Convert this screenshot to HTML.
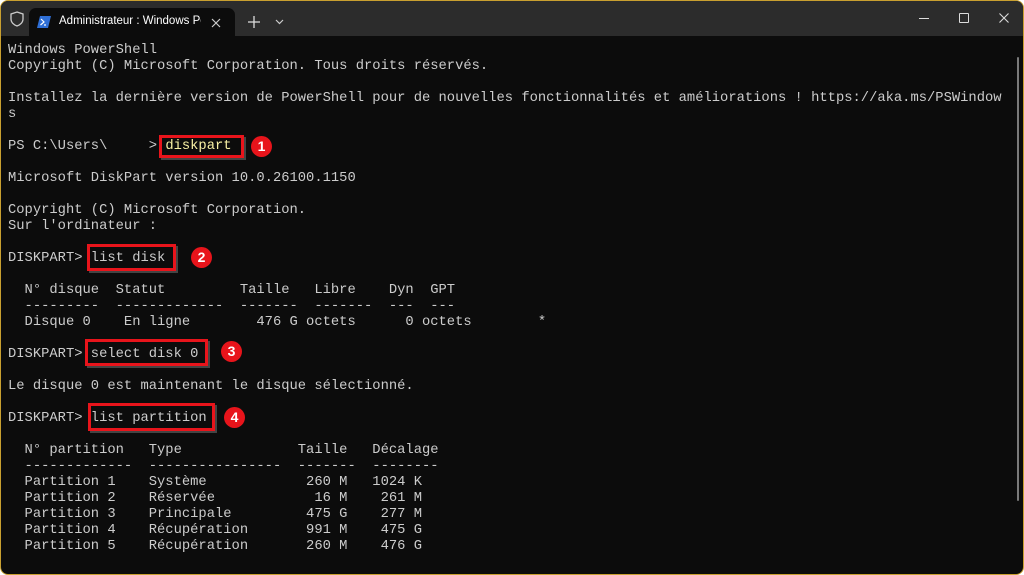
<!DOCTYPE html>
<html><head><meta charset="utf-8"><style>
*{margin:0;padding:0;box-sizing:border-box}
html,body{width:1024px;height:575px;overflow:hidden;background:#fff}
.win{position:absolute;left:0;top:0;width:1024px;height:575px;background:#0c0c0c;border:1.5px solid #c9a030;border-radius:8px;overflow:hidden}
.tb{position:absolute;left:0;top:0;width:100%;height:35px;background:#2c2c2c}
.tab{position:absolute;left:28px;top:7px;width:206px;height:29px;background:#0c0c0c;border-radius:7px 7px 0 0}
.tab span{position:absolute;left:30px;top:7px;font:11.5px "Liberation Sans",sans-serif;color:#fff;white-space:nowrap;width:142px;overflow:hidden}
.term{position:absolute;left:7px;top:42px;font-family:"Liberation Mono",monospace;font-size:13.8px;line-height:16px;color:#cccccc;white-space:pre}
.box{position:absolute;border:3px solid #e8141b;box-shadow:2px 2px 0 #444}
.num{position:absolute;width:21px;height:21px;border-radius:50%;background:#e8141b;color:#fff;font:bold 14px/21px "Liberation Sans",sans-serif;text-align:center}
.y{color:#f9f1a5}
</style></head><body>
<div class="win">
<div class="tb">
 <svg style="position:absolute;left:9px;top:10px" width="14" height="16" viewBox="0 0 14 16"><path d="M7 1 L13 3 V8 C13 11.5 10 14 7 15 C4 14 1 11.5 1 8 V3 Z" fill="none" stroke="#ccc" stroke-width="1.3"/></svg>
 <div class="tab">
  <svg style="position:absolute;left:8px;top:7px" width="14" height="14" viewBox="0 0 14 14"><path d="M3 1 H14 L11 13 H0 Z" fill="#2f6fd6"/><path d="M4 4 L7 7 L3.5 10 M7 10 H9" stroke="#fff" stroke-width="1.2" fill="none"/></svg>
  <span>Administrateur : Windows PowerShell</span>
  <svg style="position:absolute;left:182px;top:10px" width="10" height="10" viewBox="0 0 10 10"><path d="M1 1L9 9M9 1L1 9" stroke="#ccc" stroke-width="1.2"/></svg>
 </div>
 <svg style="position:absolute;left:247px;top:15px" width="12" height="12" viewBox="0 0 12 12"><path d="M6 0V12M0 6H12" stroke="#ddd" stroke-width="1.3"/></svg>
 <svg style="position:absolute;left:274px;top:18px" width="9" height="6" viewBox="0 0 9 6"><path d="M1 1L4.5 4.5L8 1" stroke="#ccc" stroke-width="1.2" fill="none"/></svg>
 <div style="position:absolute;left:918px;top:17px;width:10px;height:1px;background:#ddd"></div>
 <div style="position:absolute;left:958px;top:12px;width:10px;height:10px;border:1px solid #ddd;border-radius:1px"></div>
 <svg style="position:absolute;left:998px;top:12px" width="10" height="10" viewBox="0 0 10 10"><path d="M0.5 0.5L9.5 9.5M9.5 0.5L0.5 9.5" stroke="#ddd" stroke-width="1.1"/></svg>
</div>
<div style="position:absolute;left:1016px;top:56px;width:2px;height:444px;background:#7a7a7a;border-radius:1px"></div>
<div class="term">Windows PowerShell
Copyright (C) Microsoft Corporation. Tous droits réservés.

Installez la dernière version de PowerShell pour de nouvelles fonctionnalités et améliorations ! https://aka.ms/PSWindow
s

PS C:\Users\     > <span class="y">diskpart</span>

Microsoft DiskPart version 10.0.26100.1150

Copyright (C) Microsoft Corporation.
Sur l'ordinateur :

DISKPART> list disk

  N° disque  Statut         Taille   Libre    Dyn  GPT
  ---------  -------------  -------  -------  ---  ---
  Disque 0    En ligne        476 G octets      0 octets        *

DISKPART> select disk 0

Le disque 0 est maintenant le disque sélectionné.

DISKPART> list partition

  N° partition   Type              Taille   Décalage
  -------------  ----------------  -------  --------
  Partition 1    Système            260 M   1024 K
  Partition 2    Réservée            16 M    261 M
  Partition 3    Principale         475 G    277 M
  Partition 4    Récupération       991 M    475 G
  Partition 5    Récupération       260 M    476 G</div>
<div class="box" style="left:158px;top:134px;width:85px;height:23px"></div>
<div class="num" style="left:250px;top:135px">1</div>
<div class="box" style="left:86px;top:243px;width:89px;height:27px"></div>
<div class="num" style="left:190px;top:246px">2</div>
<div class="box" style="left:84px;top:338px;width:123px;height:27px"></div>
<div class="num" style="left:220px;top:340px">3</div>
<div class="box" style="left:87px;top:402px;width:127px;height:28px"></div>
<div class="num" style="left:223px;top:406px">4</div>
</div>
</body></html>
